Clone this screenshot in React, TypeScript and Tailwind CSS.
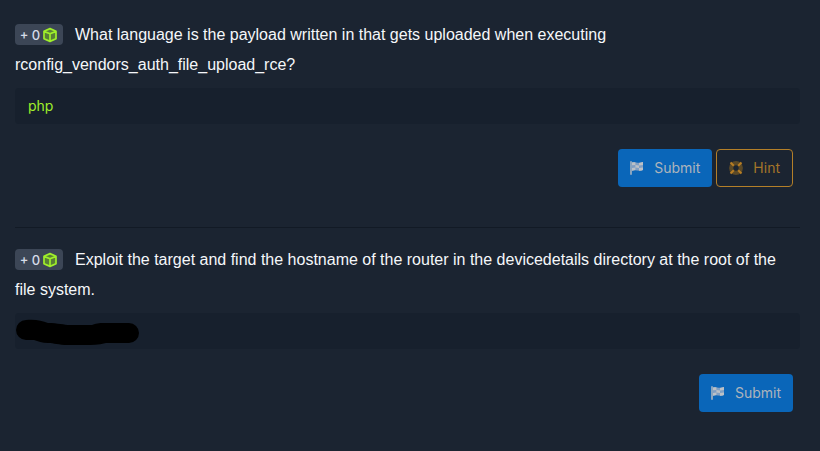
import React from "react";

function CubeIcon() {
  return (
    <svg viewBox="0 0 16 16" className="size-4" aria-hidden="true">
      <path d="M8 1.6 14 4.2V11.8L8 14.4 2 11.8V4.2Z" fill="#587f36" />
      <path
        d="M8 1.6 14 4.2V11.8L8 14.4 2 11.8V4.2ZM2 4.4 8 6.8 14 4.4M8 6.8V14.2"
        fill="none"
        stroke="#9fef2a"
        strokeWidth="1.7"
        strokeLinejoin="round"
      />
    </svg>
  );
}

function FlagIcon() {
  return (
    <svg viewBox="0 0 14 14" className="size-3.5" aria-hidden="true">
      <path d="M1 0.3V13.7" stroke="#b3bac2" strokeWidth="1.5" />
      <path d="M2 1.6C5 .2 7.5 3 13 1V9C8.500 11.200 6 8 2 9.800Z" fill="#7f9fc4" />
      <path
        d="M2 1.6C3.200 1.100 4.300 1.100 5.400 1.400V4L2 4.300ZM5.400 4 9 4.600V7L5.400 6.500ZM9 1.900 13 1V4L9 4.600ZM2 7 5.400 6.500V9.100L2 9.800ZM9 7 13 6.500V9C11.600 9.700 10.300 9.800 9 9.700Z"
        fill="#bcc1c6"
      />
    </svg>
  );
}

function HintIcon() {
  return (
    <svg viewBox="0 0 14 14" className="size-3.5" aria-hidden="true">
      <circle cx="7" cy="7" r="4.800" fill="none" stroke="#5b4927" strokeWidth="4.200" />
      <path
        d="M1.500 1.500 4.800 4.800M12.500 1.500 9.200 4.800M1.500 12.500 4.800 9.200M12.500 12.500 9.200 9.200"
        stroke="#b87e24"
        strokeWidth="2"
      />
    </svg>
  );
}

function Scribble() {
  return (
    <svg viewBox="0 0 124 28" className="absolute left-px top-1.5 h-7 w-31" aria-hidden="true">
      <path
        d="M10 1C20 0 26 2 32 4C42 4 48 6 54 6H76C82 4 84 4 90 4H113A10 10 0 0 1 113 24H90C82 26 76 26 70 26H52C42 26 38 24 32 24C26 24 22 22 18 21H10A10 10 0 0 1 10 1Z"
        fill="#000"
      />
    </svg>
  );
}

interface QuestionProps {
  id: string;
  text: string;
  answer: string;
  hint?: boolean;
  redacted?: boolean;
}

function Question({ id, text, answer, hint, redacted }: QuestionProps) {
  return (
    <form onSubmit={(e) => e.preventDefault()}>
      <div className="font-['Liberation_Sans',sans-serif] text-base leading-[30px] text-[#f5f7fa]">
        <span className="mr-3 mb-0.5 inline-flex h-[21px] w-12 items-center justify-center gap-0.5 rounded bg-[#3c4656] align-middle font-['Inter',sans-serif] text-[13px] leading-5 font-medium text-[#d5dce8]">
          <span>+ 0</span>
          <CubeIcon />
        </span>
        <label htmlFor={id}>{text}</label>
      </div>
      <div className="relative mt-2">
        <input
          id={id}
          defaultValue={answer}
          className="block h-9 w-full rounded bg-[#17202d] px-[13px] pb-0.5 text-sm text-[#9fef2a] outline-none"
        />
        {redacted && <Scribble />}
      </div>
      <div className="mt-[25px] flex justify-end gap-1 pr-[7px] text-sm">
        <button
          type="submit"
          className="flex h-[38px] items-center gap-2.5 rounded bg-[#0a66b9] px-3 text-[#adb4bc]"
        >
          <FlagIcon />
          Submit
        </button>
        {hint && (
          <button
            type="button"
            className="flex h-[38px] items-center gap-2.5 rounded border border-[#b47f28] px-3 text-[#a47529]"
          >
            <HintIcon />
            Hint
          </button>
        )}
      </div>
    </form>
  );
}

export default function App() {
  return (
    <main className="min-h-screen bg-[#1b2431] pr-5 pl-[15px] pt-5 font-['Inter','Liberation_Sans',sans-serif]">
      <Question
        id="payload-language"
        text="What language is the payload written in that gets uploaded when executing rconfig_vendors_auth_file_upload_rce?"
        answer="php"
        hint
      />
      <hr className="mt-10 mb-[17px] border-[#121a25]" />
      <Question
        id="router-hostname"
        text="Exploit the target and find the hostname of the router in the devicedetails directory at the root of the file system."
        answer=""
        redacted
      />
    </main>
  );
}
